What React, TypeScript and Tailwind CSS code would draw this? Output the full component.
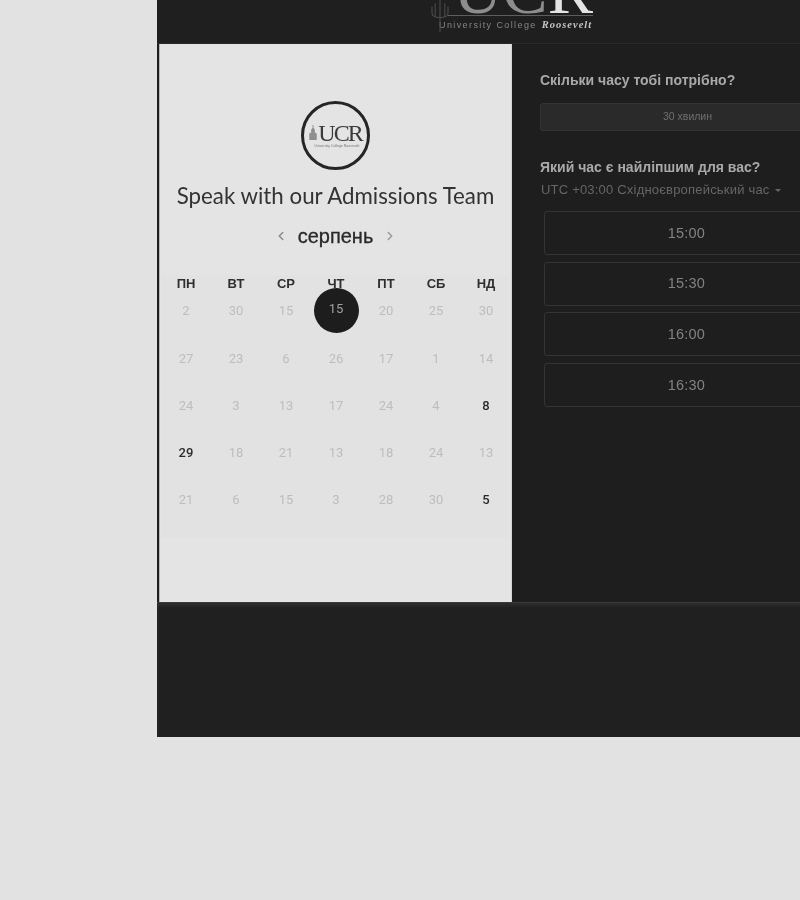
import React from "react";
import { ChevronLeft, ChevronRight } from "lucide-react";

const weekDays = ["ПН", "ВТ", "СР", "ЧТ", "ПТ", "СБ", "НД"];

const weeks = [
  [2, 30, 15, 15, 20, 25, 30],
  [27, 23, 6, 26, 17, 1, 14],
  [24, 3, 13, 17, 24, 4, 8],
  [29, 18, 21, 13, 18, 24, 13],
  [21, 6, 15, 3, 28, 30, 5],
];

const available = new Set(["2-6", "3-0", "4-6"]);
const slots = ["15:00", "15:30", "16:00", "16:30"];

const Tower = ({ className }: { className?: string }) => (
  <svg viewBox="0 0 24 40" className={className} fill="none" stroke="currentColor">
    <path d="M12 0v40M6 4v18M18 4v18M2 8v8q0 6 10 6t10-6V8" strokeWidth="1.4" />
  </svg>
);

// small building mark next to the round logo
const TowerSolid = ({ className }: { className?: string }) => (
  <svg viewBox="0 0 8 16" className={className} fill="currentColor">
    <path d="M3.5 0h1v3l1.5 2v3l2 1v7H0V9l2-1V5l1.5-2z" />
  </svg>
);

const Header = () => (
  <div className="flex h-[44px] shrink-0 items-end overflow-hidden border-b border-[#2a2a2a] bg-[#1f1f1f] pb-[12px] pl-[282px]">
    <div className="relative flex w-[154px] shrink-0 flex-col items-stretch">
      <Tower className="absolute bottom-[-1px] left-[-9px] h-[32px] w-[20px] text-[#4a4a4a]" />
      <div className="flex h-[60px] items-end justify-end pb-[2px]">
        <span className="font-['Liberation_Serif',serif] text-[68px] leading-[46px] text-[#8d8d8d]">UC</span>
        <span className="font-['Liberation_Serif',serif] text-[68px] leading-[46px] text-[#e4e4e4]">R</span>
      </div>
      <div className="ml-[9px] h-[1px] bg-[#5e5e5e]" />
      <div className="mt-[3px] flex items-baseline leading-[12px]">
        <span className="whitespace-nowrap font-['Liberation_Sans',sans-serif] text-[9px] tracking-[1.4px] text-[#868686]">
          University College
        </span>
        <span className="ml-[5px] whitespace-nowrap font-['Liberation_Serif',serif] text-[10.5px] font-bold italic tracking-[1px] text-[#c4c4c4]">
          Roosevelt
        </span>
      </div>
    </div>
  </div>
);

const Calendar = () => (
  <div className="mx-[3px] w-[352px] shrink-0 border-r border-[#d4d4d4] bg-[#e4e4e4] shadow-[-1px_0_0_#b5b5b5]">
    <div className="flex flex-col items-center pt-[57px]">
      <div className="flex h-[69px] w-[69px] items-center justify-center rounded-full border-[3px] border-[#252525]">
        <div className="flex flex-col items-center">
          <div className="flex items-end">
            <TowerSolid className="mb-[3px] mr-[1px] h-[15px] w-[8px] text-[#8f8f8f]" />
            <span className="font-['Liberation_Serif',serif] text-[24px] leading-[20px] tracking-[-2px] text-[#3a3a3a]">
              UCR
            </span>
          </div>
          <span className="ml-[3px] mt-[1px] whitespace-nowrap font-['Liberation_Sans',sans-serif] text-[3.5px] leading-[4px] text-[#777777]">
            University College Roosevelt
          </span>
        </div>
      </div>
      <h1 className="mt-[11px] font-['Lato',sans-serif] text-[22.3px] leading-[30px] text-[#333333]">
        Speak with our Admissions Team
      </h1>
      <div className="mt-[10px] flex h-[30px] items-center">
        <ChevronLeft className="h-[14px] w-[14px] text-[#8a8a8a]" strokeWidth={2.5} />
        <span className="mx-[10px] font-['Liberation_Sans',sans-serif] text-[20px] text-[#292929] [-webkit-text-stroke:0.3px_#292929]">
          серпень
        </span>
        <ChevronRight className="h-[14px] w-[14px] text-[#9a9a9a]" strokeWidth={2.5} />
      </div>
    </div>
    <div className="ml-[1px] mr-[3px] mt-[24px] h-[263px] bg-[#e2e2e2]">
      <div className="grid grid-cols-[repeat(7,50px)]">
        {weekDays.map((d) => (
          <div
            key={d}
            className="text-center font-['Liberation_Sans',sans-serif] text-[13px] font-bold leading-[18px] text-[#2f2f2f]"
          >
            {d}
          </div>
        ))}
      </div>
      <div className="grid grid-cols-[repeat(7,50px)] auto-rows-[47.3px] pt-[3px]">
        {weeks.map((week, r) =>
          week.map((day, c) => {
            const selected = r === 0 && c === 3;
            return (
              <div key={`${r}-${c}`} className="flex h-[30px] items-center justify-center">
                {selected ? (
                  <span className="mt-[-2px] flex h-[45px] w-[45px] shrink-0 items-center justify-center rounded-full bg-[#1d1d1d] pb-[2px] font-['Roboto',sans-serif] text-[13px] text-[#a0a0a0]">
                    {day}
                  </span>
                ) : (
                  <span
                    className={
                      available.has(`${r}-${c}`)
                        ? "font-['Roboto',sans-serif] text-[13px] font-medium text-[#2b2b2b]"
                        : "font-['Roboto',sans-serif] text-[13px] text-[#bdbdbd]"
                    }
                  >
                    {day}
                  </span>
                )}
              </div>
            );
          }),
        )}
      </div>
    </div>
  </div>
);

const Booking = () => (
  <div className="w-[320px] shrink-0 pl-[25px] font-['Liberation_Sans',sans-serif]">
    <h2 className="mt-[27px] text-[14px] font-bold leading-[18px] text-[#a9a9a9]">Скільки часу тобі потрібно?</h2>
    <div className="mt-[14px] flex h-[28px] w-[295px] items-center justify-center rounded-[3px] border border-[#333333] bg-[#2a2a2a] text-[10.5px] text-[#6f6f6f]">
      30 хвилин
    </div>
    <h2 className="mt-[27px] text-[14px] font-bold leading-[18px] text-[#a9a9a9]">Який час є найліпшим для вас?</h2>
    <div className="mt-[6px] flex items-center pl-[1px] text-[13px] leading-[16px] tracking-[0.2px] text-[#666666]">
      UTC +03:00 Східноєвропейський час
      <span className="ml-[5px] mt-[1px] h-0 w-0 border-x-[3px] border-t-[3px] border-x-transparent border-t-[#666666]" />
    </div>
    <div className="ml-[4px] mt-[13px] flex w-[285px] flex-col gap-[6.7px]">
      {slots.map((s) => (
        <div
          key={s}
          className="flex h-[44px] items-center justify-center rounded-[3px] border border-[#333333] pt-[1px] text-[14.5px] tracking-[0.2px] text-[#828282]"
        >
          {s}
        </div>
      ))}
    </div>
  </div>
);

export default function App() {
  return (
    <div className="h-[900px] w-[800px] overflow-hidden bg-[#e2e2e2] pl-[157px] blur-[0.4px]">
      <div className="flex h-[737px] w-[700px] flex-col bg-[#202020]">
        <Header />
        <div className="flex h-[558px] shrink-0 bg-[#1e1e1e]">
          <Calendar />
          <Booking />
        </div>
        <div className="flex-1 border-t border-[#3a3a3a] bg-[#202020] shadow-[inset_0_3px_3px_rgba(255,255,255,0.06)]" />
      </div>
    </div>
  );
}
